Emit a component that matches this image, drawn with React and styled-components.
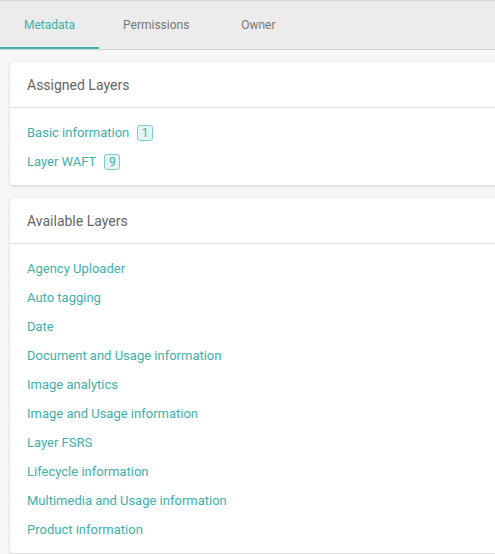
import React from "react";
import styled, { createGlobalStyle } from "styled-components";

const Global = createGlobalStyle`
  html, body { margin: 0; padding: 0; background: #f6f6f6; overflow: hidden; }
  body { font-family: Roboto, "Noto Sans", sans-serif; }
`;

const TEAL = "#3fb0aa";

const Page = styled.div`
  width: 495px;
  height: 554px;
  overflow: hidden;
  background: #f6f6f6;
`;

const TabBar = styled.div`
  display: flex;
  height: 48px;
  background: #ececec;
  border-top: 1px solid #d6d6d6;
  border-bottom: 1px solid #d2d2d2;
`;

const Tab = styled.div`
  box-sizing: border-box;
  min-width: 90px;
  padding: 2px 24px 0;
  display: flex;
  align-items: center;
  justify-content: center;
  font-size: 12px;
  color: ${(p) => (p.$active ? TEAL : "#777")};
  border-bottom: 2px solid ${(p) => (p.$active ? TEAL : "transparent")};
`;

const Content = styled.div`
  display: flex;
  flex-direction: column;
  gap: 13px;
  padding: 12px 0 0 10px;
`;

const Card = styled.div`
  background: #fff;
  border-radius: 3px;
  margin-right: -20px;
  box-shadow: 0 1px 3px rgba(0, 0, 0, 0.16);
`;

const CardHeader = styled.div`
  height: 45px;
  display: flex;
  align-items: center;
  padding: 0 17px;
  font-size: 14px;
  color: #666;
  border-bottom: 1px solid #dedede;
`;

const List = styled.div`
  padding: 10px 17px 9px;
`;

const Item = styled.div`
  height: 29px;
  display: flex;
  align-items: center;
  gap: 8px;
  font-size: 13px;
  color: ${TEAL};
`;

const Badge = styled.span`
  box-sizing: border-box;
  min-width: 16px;
  height: 16px;
  padding: 0 3px;
  display: inline-flex;
  align-items: center;
  justify-content: center;
  border: 1px solid #7fcbc6;
  border-radius: 3px;
  background: #e6f5f4;
  font-size: 12px;
  color: ${TEAL};
`;

const assigned = [
  { name: "Basic information", count: 1 },
  { name: "Layer WAFT", count: 9 },
];

const available = [
  "Agency Uploader",
  "Auto tagging",
  "Date",
  "Document and Usage information",
  "Image analytics",
  "Image and Usage information",
  "Layer FSRS",
  "Lifecycle information",
  "Multimedia and Usage information",
  "Product information",
];

export default function App() {
  return (
    <Page>
      <Global />
      <TabBar>
        <Tab $active>Metadata</Tab>
        <Tab>Permissions</Tab>
        <Tab>Owner</Tab>
      </TabBar>
      <Content>
        <Card>
          <CardHeader>Assigned Layers</CardHeader>
          <List>
            {assigned.map((a) => (
              <Item key={a.name}>
                {a.name}
                <Badge>{a.count}</Badge>
              </Item>
            ))}
          </List>
        </Card>
        <Card>
          <CardHeader>Available Layers</CardHeader>
          <List>
            {available.map((n) => (
              <Item key={n}>{n}</Item>
            ))}
          </List>
        </Card>
      </Content>
    </Page>
  );
}
